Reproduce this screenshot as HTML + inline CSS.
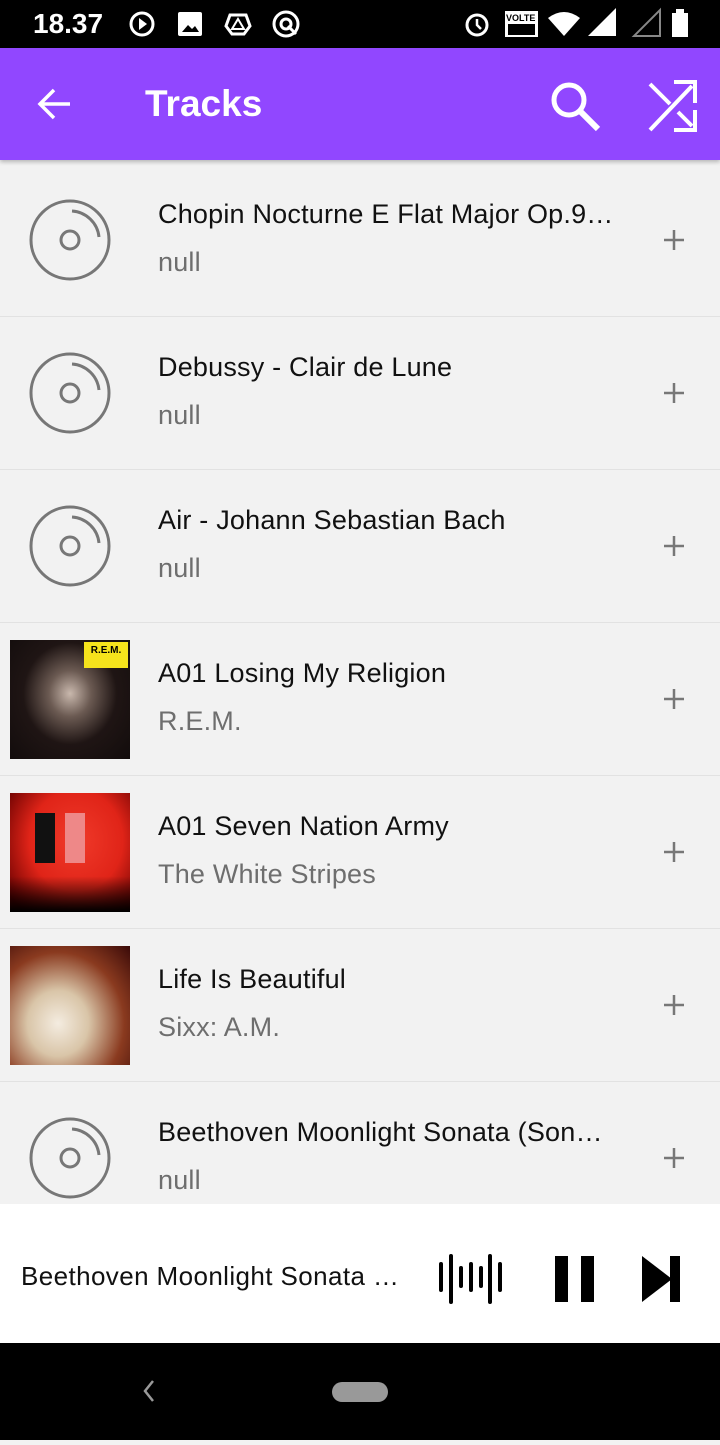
<!DOCTYPE html>
<html><head><meta charset="utf-8"><style>
*{margin:0;padding:0;box-sizing:border-box}
body{width:720px;height:1440px;overflow:hidden;background:#f2f2f2;font-family:"Liberation Sans",Roboto,sans-serif;position:relative}
.sb{position:absolute;top:0;left:0;width:720px;height:48px;background:#000;color:#fff}
.ab{position:absolute;top:48px;left:0;width:720px;height:112px;background:#9147ff;box-shadow:0 2px 4px rgba(0,0,0,.25)}
.row{position:absolute;left:0;width:720px;height:153px;border-bottom:1px solid #e2e2e2}
.t{position:absolute;left:158px;top:35px;font-size:27px;letter-spacing:0.2px;color:#111;white-space:nowrap;width:456px;overflow:hidden;text-overflow:ellipsis}
.s{position:absolute;left:158px;top:83px;font-size:27px;letter-spacing:0.2px;color:#6e6e6e}
.plus{position:absolute;left:664px;top:66px}
.disc{position:absolute;left:28px;top:35px}
.art{position:absolute;left:10px;top:17px;width:120px;height:119px}
.pl{position:absolute;top:1204px;left:0;width:720px;height:139px;background:#fff}
.nav{position:absolute;top:1343px;left:0;width:720px;height:97px;background:#000}
</style></head><body>
<div class="sb">
<div style="position:absolute;left:33px;top:8px;font-size:28px;font-weight:bold">18.37</div>
<svg width="720" height="48" style="position:absolute;left:0;top:0">
<circle cx="142" cy="24" r="11" fill="none" stroke="#fff" stroke-width="3"/><path d="M139 18 L147 24 L139 30Z" fill="#fff"/>
<rect x="178" y="12" width="24" height="24" rx="2" fill="#fff"/><path d="M182 32 L188 25 L192 29 L195 26 L199 32Z" fill="#000"/>
<path d="M230 15 L246 15 L250 26 L244 34 L232 34 L226 26Z" fill="none" stroke="#fff" stroke-width="3"/><path d="M238 19 L244 29 L232 29Z" fill="none" stroke="#fff" stroke-width="2"/>
<circle cx="286" cy="24" r="12" fill="none" stroke="#fff" stroke-width="3"/><circle cx="286" cy="24" r="5" fill="none" stroke="#fff" stroke-width="3"/><path d="M288 26 L296 34" stroke="#fff" stroke-width="3"/>
<circle cx="477" cy="25" r="10" fill="none" stroke="#fff" stroke-width="3"/><path d="M477 19 L477 25 L481 29" stroke="#fff" stroke-width="2.5" fill="none"/>
<rect x="505" y="11" width="33" height="26" fill="#fff"/><rect x="508" y="24" width="27" height="11" fill="#000"/><text x="506" y="21" font-size="9" font-weight="bold" fill="#000" font-family="Liberation Sans">VOLTE</text>
<path d="M548 18 Q564 6 580 18 L564 36Z" fill="#fff"/>
<path d="M588 36 L616 36 L616 8Z" fill="#fff"/>
<path d="M634 36 L660 36 L660 10Z" fill="none" stroke="#888" stroke-width="2"/>
<rect x="672" y="13" width="16" height="24" fill="#fff"/><rect x="676" y="9" width="8" height="4" fill="#fff"/>
</svg></div>
<div class="ab">
<svg width="720" height="112" style="position:absolute;left:0;top:0">
<path d="M70 56 L40 56 M54 42 L40 56 L54 70" stroke="#fff" stroke-width="3.5" fill="none"/>
<circle cx="569" cy="52" r="15" fill="none" stroke="#fff" stroke-width="5"/><path d="M580 63 L598 81" stroke="#fff" stroke-width="6"/>
<path d="M650 36 L670 56 M678 64 L692 78 M650 82 L692 38 M674 34 L695 34 L695 55 M695 62 L695 82 L674 82" stroke="#fff" stroke-width="4" fill="none"/>
</svg>
<div style="position:absolute;left:145px;top:35px;font-size:37px;font-weight:bold;color:#fff">Tracks</div>
</div>

<div class="row" style="top:164px"><svg class="disc" width="84" height="84"><circle cx="42" cy="41" r="39" fill="none" stroke="#777" stroke-width="3"/><circle cx="42" cy="41" r="9" fill="none" stroke="#777" stroke-width="3"/><path d="M44 12 A29 29 0 0 1 71 38" fill="none" stroke="#777" stroke-width="3"/></svg><div class="t">Chopin Nocturne E Flat Major Op.9 No.2</div><div class="s">null</div><svg class="plus" width="20" height="20"><path d="M10 0V20M0 10H20" stroke="#777" stroke-width="2.5"/></svg></div>
<div class="row" style="top:317px"><svg class="disc" width="84" height="84"><circle cx="42" cy="41" r="39" fill="none" stroke="#777" stroke-width="3"/><circle cx="42" cy="41" r="9" fill="none" stroke="#777" stroke-width="3"/><path d="M44 12 A29 29 0 0 1 71 38" fill="none" stroke="#777" stroke-width="3"/></svg><div class="t">Debussy - Clair de Lune</div><div class="s">null</div><svg class="plus" width="20" height="20"><path d="M10 0V20M0 10H20" stroke="#777" stroke-width="2.5"/></svg></div>
<div class="row" style="top:470px"><svg class="disc" width="84" height="84"><circle cx="42" cy="41" r="39" fill="none" stroke="#777" stroke-width="3"/><circle cx="42" cy="41" r="9" fill="none" stroke="#777" stroke-width="3"/><path d="M44 12 A29 29 0 0 1 71 38" fill="none" stroke="#777" stroke-width="3"/></svg><div class="t">Air - Johann Sebastian Bach</div><div class="s">null</div><svg class="plus" width="20" height="20"><path d="M10 0V20M0 10H20" stroke="#777" stroke-width="2.5"/></svg></div>
<div class="row" style="top:623px"><div class="art" style="background:radial-gradient(ellipse at 50% 45%,#c9b8ad 0,#6b5a52 25%,#1f1514 55%,#120c0c 100%)"><div style="position:absolute;right:2px;top:2px;width:44px;height:26px;background:#f5e31c;font-size:10px;font-weight:bold;text-align:center;line-height:18px">R.E.M.</div></div><div class="t">A01 Losing My Religion</div><div class="s">R.E.M.</div><svg class="plus" width="20" height="20"><path d="M10 0V20M0 10H20" stroke="#777" stroke-width="2.5"/></svg></div>
<div class="row" style="top:776px"><div class="art" style="background:linear-gradient(#0000,#0000 70%,#000 100%),radial-gradient(ellipse at 55% 40%,#f03a2a 0,#e02418 50%,#600 90%)"><div style="position:absolute;left:25px;top:20px;width:20px;height:50px;background:#111"></div><div style="position:absolute;left:55px;top:20px;width:20px;height:50px;background:#e88;"></div></div><div class="t">A01 Seven Nation Army</div><div class="s">The White Stripes</div><svg class="plus" width="20" height="20"><path d="M10 0V20M0 10H20" stroke="#777" stroke-width="2.5"/></svg></div>
<div class="row" style="top:929px"><div class="art" style="background:radial-gradient(ellipse at 40% 65%,#f4ece0 0,#d9c5a8 30%,#8a3a1f 65%,#3a0a08 100%)"></div><div class="t">Life Is Beautiful</div><div class="s">Sixx: A.M.</div><svg class="plus" width="20" height="20"><path d="M10 0V20M0 10H20" stroke="#777" stroke-width="2.5"/></svg></div>
<div class="row" style="top:1082px;border:0"><svg class="disc" width="84" height="84"><circle cx="42" cy="41" r="39" fill="none" stroke="#777" stroke-width="3"/><circle cx="42" cy="41" r="9" fill="none" stroke="#777" stroke-width="3"/><path d="M44 12 A29 29 0 0 1 71 38" fill="none" stroke="#777" stroke-width="3"/></svg><div class="t">Beethoven Moonlight Sonata (Sonata No. 14)</div><div class="s">null</div><svg class="plus" width="20" height="20"><path d="M10 0V20M0 10H20" stroke="#777" stroke-width="2.5"/></svg></div>

<div class="pl">
<div style="position:absolute;left:21px;top:57px;font-size:26px;letter-spacing:0.4px;color:#111;white-space:nowrap;width:385px;overflow:hidden">Beethoven Moonlight Sonata …</div>
<svg width="720" height="139" style="position:absolute;left:0;top:0">
<g stroke="#000" stroke-width="4" stroke-linecap="round">
<path d="M441 60V86M451 52V98M461 64V82M471 60V86M481 64V82M490 52V98M500 60V86"/></g>
<rect x="555" y="52" width="13" height="46" fill="#000"/><rect x="581" y="52" width="13" height="46" fill="#000"/>
<path d="M642 52L672 75L642 98Z" fill="#000"/><rect x="670" y="52" width="10" height="46" fill="#000"/>
</svg></div>
<div class="nav"><svg width="720" height="97"><path d="M153 38L145 48L153 58" stroke="#999" stroke-width="2.5" fill="none"/><rect x="332" y="39" width="56" height="20" rx="10" fill="#999"/></svg></div>
</body></html>
